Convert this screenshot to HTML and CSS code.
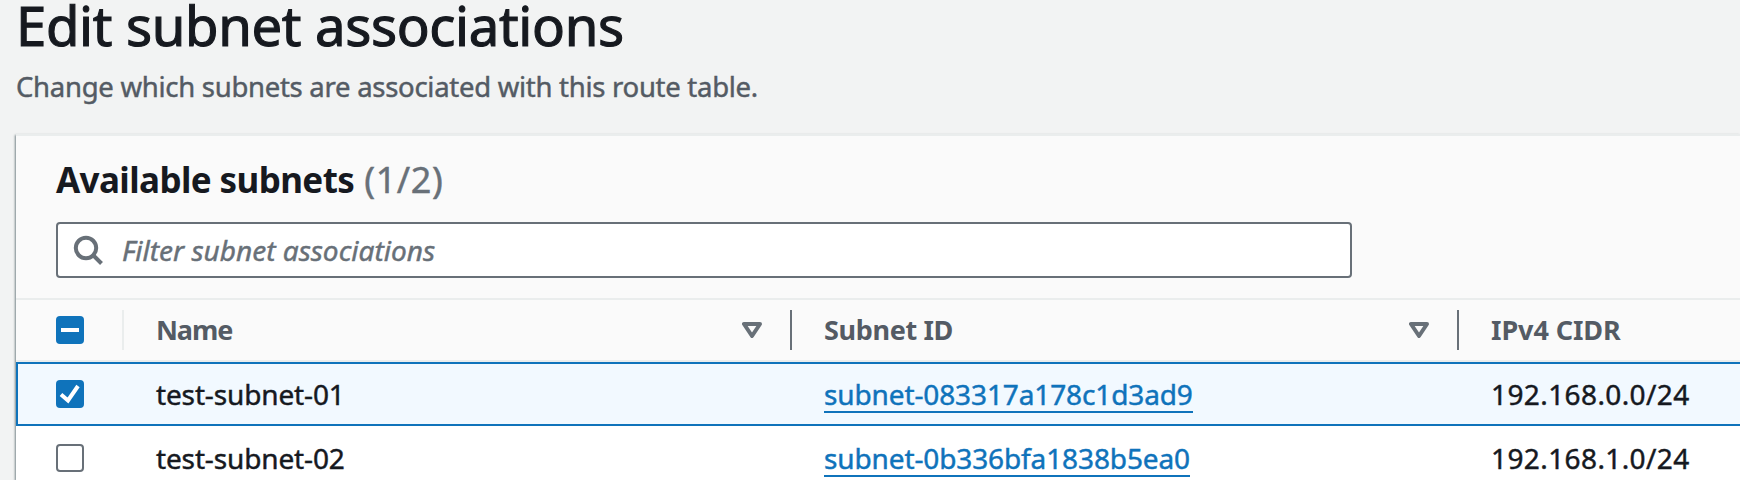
FILE: index.html
```
<!DOCTYPE html>
<html lang="en">
<head>
<meta charset="utf-8">
<title>Edit subnet associations</title>
<link rel="stylesheet" href="styles.css">
</head>
<body>
<main class="page">
  <header class="page-header">
    <h1 class="title">Edit subnet associations</h1>
    <p class="description">Change which subnets are associated with this route table.</p>
  </header>
  <section class="card">
    <div class="toolbar">
      <h2 class="heading"><span class="heading-text">Available subnets</span><span class="count">(1/2)</span></h2>
      <div class="search">
        <svg class="search-icon" width="32" height="32" viewBox="0 0 32 32"><circle cx="14" cy="14" r="10.2"/><path d="M21 21l8.5 8.5"/></svg>
        <span class="placeholder">Filter subnet associations</span>
      </div>
    </div>
    <div class="row head">
      <div class="cell select"><span class="box on"><svg width="28" height="28" viewBox="0 0 28 28"><path d="M5 14h18"/></svg></span></div>
      <div class="cell"><span class="label name">Name</span><svg class="sort" width="20" height="16" viewBox="0 0 20 16"><path d="M2 2h16l-8 12z"/></svg></div>
      <div class="cell"><span class="label sid">Subnet ID</span><svg class="sort" width="20" height="16" viewBox="0 0 20 16"><path d="M2 2h16l-8 12z"/></svg></div>
      <div class="cell last"><span class="label ip">IPv4 CIDR</span></div>
    </div>
    <div class="row selected">
      <div class="cell select"><span class="box on"><svg width="28" height="28" viewBox="0 0 28 28"><path d="M5 14.5l7 6L22 6"/></svg></span></div>
      <div class="cell"><span class="text">test-subnet-01</span></div>
      <div class="cell"><a class="link">subnet-083317a178c1d3ad9</a></div>
      <div class="cell last"><span class="cidr">192.168.0.0/24</span></div>
    </div>
    <div class="row">
      <div class="cell select"><span class="box"></span></div>
      <div class="cell"><span class="text">test-subnet-02</span></div>
      <div class="cell"><a class="link">subnet-0b336bfa1838b5ea0</a></div>
      <div class="cell last"><span class="cidr">192.168.1.0/24</span></div>
    </div>
  </section>
</main>
</body>
</html>
```
FILE: styles.css
```
* { box-sizing: border-box; }
body {
  margin: 0;
  height: 480px;
  overflow: hidden;
  background: #f2f3f3;
  color: #16191f;
  font-family: "Noto Sans", "Open Sans", sans-serif;
  font-size: 28px;
  line-height: 40px;
  -webkit-text-stroke: .45px currentColor;
}
.page { padding-left: 16px; }
.page-header { height: 134px; white-space: nowrap; }
.title {
  margin: 0;
  height: 67px;
  font-size: 54.5px;
  line-height: 51px;
  font-weight: 400;
  letter-spacing: -.36px;
  -webkit-text-stroke-width: 1.1px;
}
.description { margin: 0; color: #545b64; font-size: 27.5px; letter-spacing: -.28px; }
.card {
  height: 346px;
  border-top: 2px solid #eaeded;
  background: #fff;
  box-shadow: -1px 1px 2px rgba(0, 28, 36, .5);
}
.toolbar {
  height: 164px;
  padding: 20px 40px 0;
  background: #fafafa;
  border-bottom: 2px solid #eaeded;
}
.heading {
  display: flex;
  gap: 10px;
  margin: 0;
  height: 66px;
  font-size: 36px;
  line-height: 48px;
  font-weight: 700;
}
.heading-text { font-size: 35px; letter-spacing: -.6px; -webkit-text-stroke-width: 0; }
.count { color: #687078; font-weight: 400; letter-spacing: .6px; }
.search {
  display: flex;
  align-items: center;
  width: 1296px;
  height: 56px;
  padding-left: 14px;
  border: 2px solid #687078;
  border-radius: 4px;
  background: #fff;
  color: #687078;
}
.search-icon { fill: none; stroke: #687078; stroke-width: 4; }
.placeholder { margin-left: 18px; font-style: italic; }
.row {
  display: grid;
  grid-template-columns: 108px 668px 667px 1fr;
  height: 64px;
  white-space: nowrap;
}
.cell { display: flex; align-items: center; padding-left: 32px; }
.select { padding-left: 40px; }
.head {
  height: 62px;
  background: #fafafa;
  border-bottom: 2px solid #eaeded;
  color: #545b64;
  font-weight: 700;
}
.head .cell { height: 40px; margin-top: 10px; border-right: 2px solid #687078; }
.head .select { border-right-color: #eaeded; }
.head .last { border-right: 0; }
.label { font-size: 27px; -webkit-text-stroke-width: 0; }
.name { letter-spacing: -1.1px; }
.sid { letter-spacing: -.35px; }
.ip { letter-spacing: -.1px; }
.text { letter-spacing: -.14px; }
.cidr { letter-spacing: .4px; }
.text, .cidr { padding-bottom: 1px; }
.sort { margin: 0 28px 0 auto; fill: none; stroke: #687078; stroke-width: 4; stroke-linejoin: round; }
.selected {
  background: #f2f9ff;
  border: 2px solid #0f73bb;
  border-right: 0;
  grid-template-columns: 106px 668px 667px 1fr;
}
.selected .select { padding-left: 38px; }
.box {
  display: block;
  width: 28px;
  height: 28px;
  border: 2px solid #687078;
  border-radius: 4px;
  background: #fff;
}
.box.on { border: 0; background: #0f73bb; }
.box svg { display: block; fill: none; stroke: #fff; stroke-width: 4; }
.link { height: 38px; line-height: 38px; border-bottom: 2px solid #0f73bb; color: #0f73bb; letter-spacing: -.12px; }
```
